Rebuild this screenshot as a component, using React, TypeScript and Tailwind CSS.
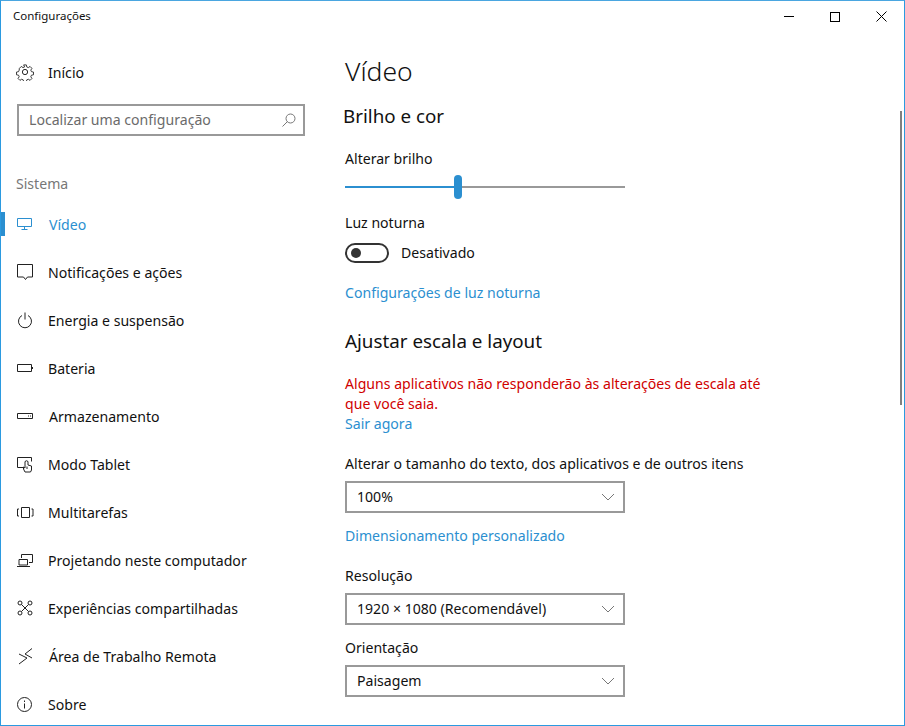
import { ReactNode } from "react"

const ink = "#111111"

function Icon({ children }: { children: ReactNode }) {
  return (
    <svg width="18" height="18" viewBox="0 0 18 18" fill="none" stroke="#222" strokeWidth="1" className="shrink-0">
      {children}
    </svg>
  )
}

const navItems: { label: string; icon: ReactNode; active?: boolean; gap?: string }[] = [
  {
    label: "Vídeo",
    active: true,
    gap: "ml-[15px]",
    icon: (
      <svg width="18" height="18" viewBox="0 0 18 18" fill="none" stroke="#2b8fd0" strokeWidth="1" className="shrink-0">
        <path d="M1.500 2.500h14v8h-14zM8.500 10.500v2.500M5.500 13.500h6" />
      </svg>
    ),
  },
  {
    label: "Notificações e ações",
    icon: (
      <Icon>
        <path d="M1.500 .5h15v12.500h-5l-2 2.500-2-2.500h-6z" />
      </Icon>
    ),
  },
  {
    label: "Energia e suspensão",
    icon: (
      <Icon>
        <path d="M6 3.500a6.500 6.500 0 1 0 6 0M9 .5v7" />
      </Icon>
    ),
  },
  {
    label: "Bateria",
    icon: (
      <Icon>
        <path d="M1.500 4.500h14v7h-14z" />
        <path d="M16.500 7v2" />
      </Icon>
    ),
  },
  {
    label: "Armazenamento",
    gap: "ml-[15px]",
    icon: (
      <Icon>
        <path d="M1.500 5.500h15v5h-15z" />
        <path d="M12 8h1M14 8h1" />
      </Icon>
    ),
  },
  {
    label: "Modo Tablet",
    icon: (
      <Icon>
        <path d="M7 11.500H1.500v-10h14v4" />
        <path d="M9 16l-1.500-3v-2l1.500 1V5.500q1.500-1.500 3 0V9l3.500 1v4l-1 2z" />
        <path d="M11 10.500v2.500" />
      </Icon>
    ),
  },
  {
    label: "Multitarefas",
    icon: (
      <Icon>
        <path d="M5.500 3.500h8v10h-8z" />
        <path d="M3 5H1.500v7H3M15.500 5H17v7h-1.500" />
      </Icon>
    ),
  },
  {
    label: "Projetando neste computador",
    icon: (
      <Icon>
        <path d="M5.500 6V2.500h11v8H13" />
        <path d="M3 7.500h8.500v5.500H3zM1 14.500h13" />
      </Icon>
    ),
  },
  {
    label: "Experiências compartilhadas",
    icon: (
      <Icon>
        <circle cx="4" cy="3" r="2" />
        <circle cx="14" cy="3" r="2" />
        <circle cx="4" cy="13" r="2" />
        <circle cx="14" cy="13" r="2" />
        <path d="M5.500 4.500l7 7M12.500 4.500l-7 7" />
      </Icon>
    ),
  },
  {
    label: "Área de Trabalho Remota",
    gap: "ml-[15px]",
    icon: (
      <Icon>
        <path d="M3 6l8 4-8 6M16 .5L9 6l7 4" />
      </Icon>
    ),
  },
  {
    label: "Sobre",
    icon: (
      <Icon>
        <circle cx="8.500" cy="8.500" r="7" />
        <path d="M8.500 7.500v5M8.500 4.500V6" />
      </Icon>
    ),
  },
]

function NavRow({ item }: { item: (typeof navItems)[number] }) {
  return (
    <div className="relative flex h-12 shrink-0 items-center pl-[15px] pt-[2px]">
      {item.active && <div className="absolute left-0 top-3 h-6 w-1 bg-[#2b8fd0]" />}
      <div className="flex items-center">
        {item.icon}
        <span className={`${item.gap ?? "ml-[14px]"} ${item.active ? "text-[#2b8fd0]" : ""}`}>{item.label}</span>
      </div>
    </div>
  )
}

function Dropdown({ value }: { value: string }) {
  return (
    <div className="flex h-8 w-[280px] items-center justify-between border-2 border-[#999] pl-[10px] pr-[8px]">
      <span>{value}</span>
      <svg width="14" height="8" viewBox="0 0 14 8" fill="none" stroke="#777" strokeWidth="1">
        <path d="M1 1l6 6 6-6" />
      </svg>
    </div>
  )
}

function Label({ children, className = "" }: { children: ReactNode; className?: string }) {
  return <div className={`h-5 leading-5 ${className}`}>{children}</div>
}

export default function App() {
  return (
    <div
      className="relative flex h-[726px] w-[905px] flex-col overflow-hidden border border-[#2b9ae0] border-t-[#4aa6e0] bg-white text-[14.1px]"
      style={{ fontFamily: '"Noto Sans", sans-serif', color: ink }}
    >
      <div className="flex h-[31px] shrink-0 items-center justify-between">
        <span className="-mt-[2px] pl-3 text-[11.5px]">Configurações</span>
        <div className="flex items-center">
          <div className="flex w-[46px] justify-center">
            <div className="h-px w-[10px] bg-black" />
          </div>
          <div className="flex w-[46px] justify-center">
            <div className="h-[10px] w-[10px] border border-black" />
          </div>
          <div className="flex w-[46px] justify-center">
            <svg width="11" height="11" viewBox="0 0 11 11" stroke="#000" strokeWidth="1">
              <path d="M.5.500l10 10M10.500.500l-10 10" />
            </svg>
          </div>
        </div>
      </div>

      <div className="flex min-h-0 flex-1">
        <div className="flex w-[344px] shrink-0 flex-col">
          <div className="mt-[16px] flex h-12 shrink-0 items-center pl-[15px]">
            <svg width="18" height="18" viewBox="0 0 24 24" fill="none" stroke="#222" strokeWidth="1.300" className="shrink-0">
              <circle cx="12" cy="12" r="3.500" />
              <path d="M10 1.500h4l.6 3 2.300 1 2.600-1.700 2.800 2.800-1.700 2.600 1 2.300 3 .6v4l-3 .6-1 2.300 1.700 2.600-2.800 2.800-2.600-1.700-2.300 1-.6 3h-4l-.6-3-2.300-1-2.600 1.700-2.800-2.800 1.700-2.600-1-2.300-3-.6v-4l3-.6 1-2.300L3.700 6.600l2.800-2.800 2.600 1.700 2.300-1z" transform="translate(1.200 1.200) scale(.9)" />
            </svg>
            <span className="ml-[14px] mt-[2px]">Início</span>
          </div>
          <div className="ml-[16px] mt-[8px] flex h-[32px] w-[288px] shrink-0 items-center justify-between border-2 border-[#999] pl-[10px] pr-[6px] text-[#6b6b6b]">
            <span>Localizar uma configuração</span>
            <svg width="16" height="16" viewBox="0 0 16 16" fill="none" stroke="#777" strokeWidth="1">
              <circle cx="9.500" cy="6.500" r="4.500" />
              <path d="M6.500 9.500L1.500 14.500" />
            </svg>
          </div>
          <div className="ml-[15px] mt-[38px] h-5 shrink-0 leading-5 text-[#777]">Sistema</div>
          <div className="mt-[6px] flex shrink-0 flex-col">
            {navItems.map((item) => (
              <NavRow key={item.label} item={item} />
            ))}
          </div>
        </div>

        <div className="flex min-w-0 flex-1 flex-col">
          <div className="mt-[19px] h-10 text-[26.5px] font-light leading-10">Vídeo</div>
          <div className="-ml-[2px] mt-[11px] h-7 text-[18.8px] leading-7">Brilho e cor</div>
          <Label className="mt-[19px]">Alterar brilho</Label>
          <div className="relative mt-[6px] flex h-6 w-[280px] items-center">
            <div className="h-0.5 w-[112px] bg-[#2b8fd0]" />
            <div className="h-0.5 flex-1 bg-[#999]" />
            <div className="absolute left-[109px] top-0 h-6 w-2 rounded-full bg-[#2b8fd0]" />
          </div>
          <Label className="mt-[14px]">Luz noturna</Label>
          <div className="mt-[10px] flex h-5 items-center">
            <div className="flex h-[20px] w-[44px] items-center rounded-full border-2 border-[#333] pl-[4px]">
              <div className="h-[10px] w-[10px] rounded-full bg-[#333]" />
            </div>
            <span className="ml-3">Desativado</span>
          </div>
          <Label className="mt-[20px] text-[#2b8fd0]">Configurações de luz noturna</Label>
          <div className="mt-[24px] h-7 text-[18.8px] leading-7">Ajustar escala e layout</div>
          <div className="mt-[19px] w-[440px] leading-5 text-[#d00000]">
            Alguns aplicativos não responderão às alterações de escala até que você saia.
          </div>
          <Label className="text-[#2b8fd0]">Sair agora</Label>
          <Label className="mt-[20px]">Alterar o tamanho do texto, dos aplicativos e de outros itens</Label>
          <div className="mt-[7px]">
            <Dropdown value="100%" />
          </div>
          <Label className="mt-[13px] text-[#2b8fd0]">Dimensionamento personalizado</Label>
          <Label className="mt-[20px]">Resolução</Label>
          <div className="mt-[7px]">
            <Dropdown value="1920 × 1080 (Recomendável)" />
          </div>
          <Label className="mt-[13px]">Orientação</Label>
          <div className="mt-[7px]">
            <Dropdown value="Paisagem" />
          </div>
        </div>
      </div>

      <div className="absolute right-[2px] top-[110px] h-[294px] w-[2px] bg-[#808080]" />
    </div>
  )
}
